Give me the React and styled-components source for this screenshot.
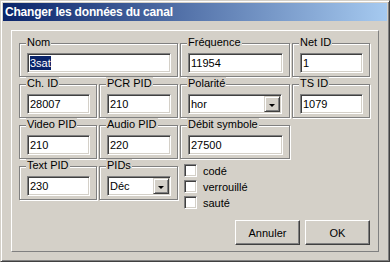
import React from 'react'
import styled, { createGlobalStyle } from 'styled-components'

const Global = createGlobalStyle`
    html, body {
        margin: 0;
        padding: 0;
        background: #d4d0c8;
    }
    body {
        font-family: "Liberation Sans", Arial, sans-serif;
        font-size: 11px;
        color: #000;
    }
`

const Window = styled.div`
    box-sizing: border-box;
    width: 390px;
    height: 262px;
    background: #d4d0c8;
    border-top: 1px solid #d4d0c8;
    border-left: 1px solid #d4d0c8;
    border-right: 1px solid #404040;
    border-bottom: 1px solid #404040;
    box-shadow: inset 1px 1px 0 #fff, inset -1px -1px 0 #808080;
    padding: 2px;
    display: flex;
    flex-direction: column;
`

const TitleBar = styled.div`
    height: 18px;
    background: linear-gradient(to right, #0a246a, #a6caf0);
    color: #fff;
    font-weight: bold;
    font-size: 12px;
    letter-spacing: -0.2px;
    line-height: 18px;
    padding-left: 2px;
    white-space: nowrap;
`

const Body = styled.div`
    flex: 1;
    padding: 9px 8px 7px 8px;
    display: flex;
`

const Panel = styled.div`
    flex: 1;
    border-top: 1px solid #fff;
    border-left: 1px solid #fff;
    border-right: 1px solid #808080;
    border-bottom: 1px solid #808080;
    padding: 12px 8px 6px 7px;
    display: flex;
    flex-direction: column;
`

const Grid = styled.div`
    display: grid;
    grid-template-columns: 78px 79px 110px 78px;
    grid-auto-rows: 34px;
    column-gap: 2px;
    row-gap: 7px;
`

const Group = styled.div`
    position: relative;
    grid-column: ${p => p.start ? `${p.start} / span ${p.span || 1}` : `span ${p.span || 1}`};
    box-sizing: border-box;
    border: 1px solid #808080;
    box-shadow: inset 1px 1px 0 #fff, 1px 1px 0 #fff;
    padding: 9px ${p => p.pr || 6}px 3px 7px;
`

const Legend = styled.span`
    position: absolute;
    top: -8px;
    left: 6px;
    padding: 0 1px;
    background: #d4d0c8;
    line-height: 13px;
`

const Field = styled.div`
    box-sizing: border-box;
    height: 20px;
    background: #fff;
    border-top: 1px solid #808080;
    border-left: 1px solid #808080;
    border-right: 1px solid #fff;
    border-bottom: 1px solid #fff;
    box-shadow: inset 1px 1px 0 #404040, inset -1px -1px 0 #d4d0c8;
    padding: 0 2px;
    line-height: 18px;
    white-space: nowrap;
    display: flex;
    align-items: center;
`

const Selected = styled.span`
    background: #0a246a;
    color: #fff;
    line-height: 14px;
`

const SelectText = styled.span`
    flex: 1;
`

const DropButton = styled.span`
    box-sizing: border-box;
    width: 16px;
    height: 16px;
    background: #d4d0c8;
    border-top: 1px solid #d4d0c8;
    border-left: 1px solid #d4d0c8;
    border-right: 1px solid #404040;
    border-bottom: 1px solid #404040;
    box-shadow: inset 1px 1px 0 #fff, inset -1px -1px 0 #808080;
    display: flex;
    align-items: center;
    justify-content: center;
    margin-right: -1px;
    padding-top: 2px;
`

const Arrow = styled.span`
    width: 0;
    height: 0;
    border-left: 3px solid transparent;
    border-right: 3px solid transparent;
    border-top: 3px solid #000;
`

const Checks = styled.div`
    grid-column: 3;
    display: flex;
    flex-direction: column;
    gap: 3px;
    margin-top: -2px;
    padding-left: 4px;
`

const CheckRow = styled.label`
    display: flex;
    align-items: center;
    gap: 6px;
    height: 13px;
`

const Box = styled.span`
    box-sizing: border-box;
    width: 13px;
    height: 13px;
    background: #fff;
    border-top: 1px solid #808080;
    border-left: 1px solid #808080;
    border-right: 1px solid #fff;
    border-bottom: 1px solid #fff;
    box-shadow: inset 1px 1px 0 #404040, inset -1px -1px 0 #d4d0c8;
`

const Buttons = styled.div`
    display: flex;
    justify-content: flex-end;
    gap: 5px;
    margin-top: auto;
`

const Button = styled.div`
    box-sizing: border-box;
    width: 65px;
    height: 25px;
    background: #d4d0c8;
    border-top: 1px solid #fff;
    border-left: 1px solid #fff;
    border-right: 1px solid #404040;
    border-bottom: 1px solid #404040;
    box-shadow: inset -1px -1px 0 #808080;
    display: flex;
    align-items: center;
    justify-content: center;
`

const TextGroup = ({ label, value, span, start, selected }) => (
    <Group span={span} start={start}>
        <Legend>{label}</Legend>
        <Field>{selected ? <Selected>{value}</Selected> : value}</Field>
    </Group>
)

const SelectGroup = ({ label, value, pr }) => (
    <Group pr={pr}>
        <Legend>{label}</Legend>
        <Field>
            <SelectText>{value}</SelectText>
            <DropButton><Arrow /></DropButton>
        </Field>
    </Group>
)

export default function App() {
    return (
        <>
            <Global />
            <Window>
                <TitleBar>Changer les données du canal</TitleBar>
                <Body>
                    <Panel>
                        <Grid>
                            <TextGroup label='Nom' value='3sat' span={2} selected />
                            <TextGroup label='Fréquence' value='11954' />
                            <TextGroup label='Net ID' value='1' />

                            <TextGroup label='Ch. ID' value='28007' />
                            <TextGroup label='PCR PID' value='210' />
                            <SelectGroup label='Polarité' value='hor' pr={7} />
                            <TextGroup label='TS ID' value='1079' />

                            <TextGroup label='Video PID' value='210' />
                            <TextGroup label='Audio PID' value='220' />
                            <TextGroup label='Débit symbole' value='27500' />

                            <TextGroup label='Text PID' value='230' start={1} />
                            <SelectGroup label='PIDs' value='Déc' />
                            <Checks>
                                <CheckRow><Box />codé</CheckRow>
                                <CheckRow><Box />verrouillé</CheckRow>
                                <CheckRow><Box />sauté</CheckRow>
                            </Checks>
                        </Grid>
                        <Buttons>
                            <Button>Annuler</Button>
                            <Button>OK</Button>
                        </Buttons>
                    </Panel>
                </Body>
            </Window>
        </>
    )
}
